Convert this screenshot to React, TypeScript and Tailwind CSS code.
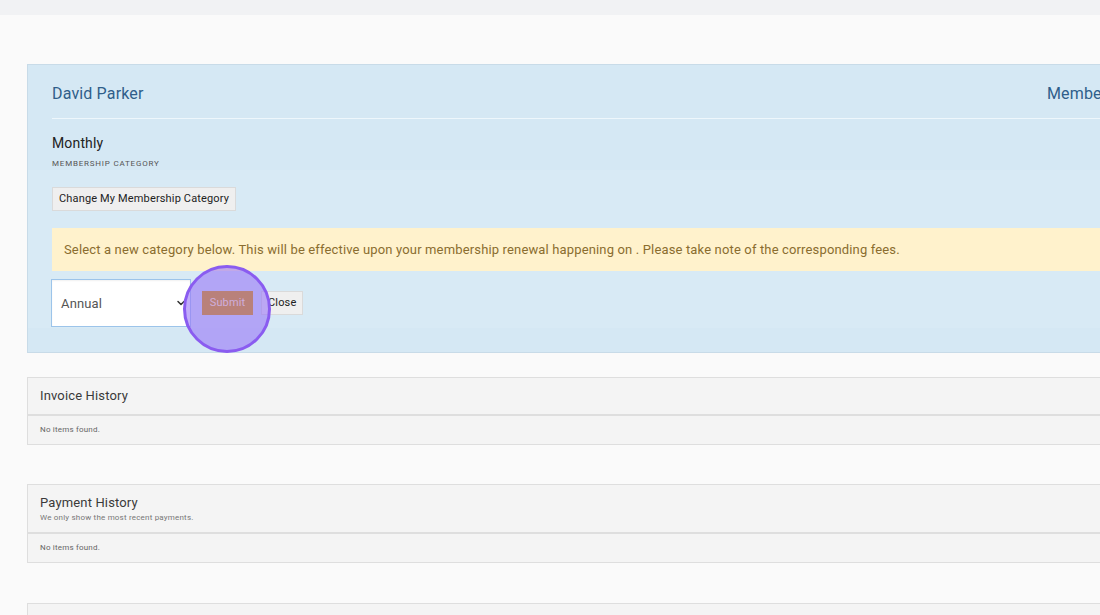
import { ChevronDown } from "lucide-react";

const font = {
  fontFamily: "Roboto, 'Noto Sans', sans-serif",
  letterSpacing: "0.15px",
};

function HistoryCard({ title, note }: { title: string; note?: string }) {
  return (
    <div className="w-[1180px] border border-[#dedede] bg-[#f4f4f4]">
      <div
        className={
          "border-b-2 border-[#dedede] px-3 " +
          (note ? "pt-[9px] pb-[8px]" : "py-[9px]")
        }
      >
        <div className="text-[13px] leading-[18px] text-[#3a3a3a]">{title}</div>
        {note && (
          <div className="text-[8px] leading-[12px] tracking-[0.2px] text-[#777]">
            {note}
          </div>
        )}
      </div>
      <div className="px-3 py-[9px] text-[8px] leading-[10px] tracking-[0.2px] text-[#666]">
        No items found.
      </div>
    </div>
  );
}

export default function App() {
  return (
    <div
      className="w-[1100px] h-[615px] overflow-hidden bg-[#fafafa]"
      style={font}
    >
      <div className="h-[15px] bg-[#f1f2f4]" />

      <div className="pl-[27px] pt-[49px] flex flex-col">
        {/* membership card */}
        <div className="w-[1180px] border border-[#c8dbe8] bg-[#d5e8f4] px-6 pb-6">
          <div className="flex items-center whitespace-nowrap pt-[17px] pb-3 border-b border-[#eef7fc]">
            <span className="w-[995px] shrink-0 text-[16px] leading-6 text-[#2f5e8a]">
              David Parker
            </span>
            <span className="shrink-0 text-[16px] leading-6 text-[#2f5e8a]">
              Member Since 2019
            </span>
          </div>

          <div className="pt-[14px]">
            <div className="text-[14px] leading-5 text-[#222]">Monthly</div>
            <div className="mt-[6px] text-[8px] leading-[10px] tracking-[0.1em] text-[#555]">
              MEMBERSHIP CATEGORY
            </div>
          </div>

          <div className="-mx-6 px-6 mt-[1px] pt-[15px] pb-[1px] bg-[#d8eaf5]">
            <button className="h-6 px-[6px] border border-[#dadada] bg-[#efefef] text-[11px] text-[#222]">
              Change My Membership Category
            </button>

            <div className="mt-[17px] h-[43px] flex items-center whitespace-nowrap pl-3 bg-[#fff2cc] text-[13px] text-[#8a6d2f]">
              Select a new category below. This will be effective upon your
              membership renewal happening on . Please take note of the
              corresponding fees.
            </div>

            <div className="relative mt-2 flex items-center">
              <div className="-ml-px w-[140px] h-12 flex items-center justify-between pl-[9px] pr-[3px] bg-white border border-[#9cc4ea] shadow-[inset_0_1px_2px_rgba(0,0,0,0.06)]">
                <span className="text-[13px] text-[#555]">Annual</span>
                <ChevronDown size={12} strokeWidth={3} className="text-[#333]" />
              </div>
              <button className="relative z-20 ml-[11px] h-6 w-[51px] bg-[#b9817a] text-[11px] text-[#cfaedd]">
                Submit
              </button>
              <button className="ml-2 h-6 px-[6px] border border-[#dadada] bg-[#efefef] text-[11px] text-[#222]">
                Close
              </button>

              {/* click highlight */}
              <div className="absolute z-10 left-[131px] top-[-14px] w-[88px] h-[88px] rounded-full border-[3px] border-[#8a5cf0] bg-[#9a76f6]/60 pointer-events-none" />
            </div>
          </div>
        </div>

        <div className="mt-6">
          <HistoryCard title="Invoice History" />
        </div>
        <div className="mt-[39px]">
          <HistoryCard
            title="Payment History"
            note="We only show the most recent payments."
          />
        </div>
        <div className="mt-10">
          <HistoryCard title="Subscription History" />
        </div>
      </div>
    </div>
  );
}
